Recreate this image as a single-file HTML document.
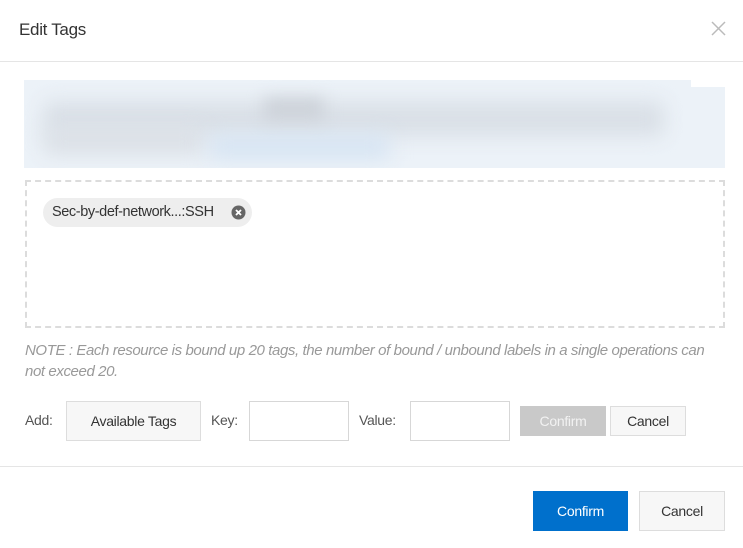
<!DOCTYPE html>
<html><head><meta charset="utf-8"><style>
*{box-sizing:border-box;margin:0;padding:0}
body{width:743px;height:548px;background:#fff;font-family:"Liberation Sans",sans-serif;color:#333;position:relative;overflow:hidden}
.a{position:absolute}
.btn{position:absolute;display:flex;align-items:center;justify-content:center;font-size:14px;border:1px solid #ddd;background:#f7f7f7;color:#333;letter-spacing:-0.3px}
.inp{position:absolute;border:1px solid #d7d7d7;background:#fff}
.lbl{position:absolute;font-size:14px;color:#555;letter-spacing:-0.3px}
</style></head><body>
<div class="a" style="left:19px;top:20px;font-size:17px;color:#333;letter-spacing:-0.3px">Edit Tags</div>
<svg class="a" style="left:711px;top:21px" width="15" height="15" viewBox="0 0 15 15"><path d="M1 1L14 14M14 1L1 14" stroke="#bbb" stroke-width="1.5"/></svg>
<div class="a" style="left:0;top:61px;width:743px;height:1px;background:#e5e5e5"></div>

<div class="a" style="left:24px;top:80px;width:701px;height:88px;background:#ecf2f8;overflow:hidden">
  <div class="a" style="left:667px;top:0;width:34px;height:7px;background:#fff"></div>
  <div class="a" style="left:20px;top:22px;width:620px;height:34px;background:#d9dfe6;filter:blur(10px)"></div>
  <div class="a" style="left:20px;top:48px;width:160px;height:26px;background:#dbe0e6;filter:blur(10px)"></div>
  <div class="a" style="left:185px;top:55px;width:180px;height:24px;background:#d6e4f3;filter:blur(10px)"></div>
  <div class="a" style="left:240px;top:18px;width:60px;height:22px;background:#cdd2d9;filter:blur(8px)"></div>
</div>

<div class="a" style="left:25px;top:180px;width:700px;height:148px;border:2px dashed #dcdcdc"></div>
<div class="a" style="left:43px;top:198px;width:209px;height:29px;border-radius:15px;background:#eee;font-size:14.5px;color:#333;line-height:29px;padding-left:9px;letter-spacing:-0.4px">Sec-by-def-network...:SSH</div>
<svg class="a" style="left:231px;top:205px" width="15" height="15" viewBox="0 0 15 15"><circle cx="7.5" cy="7.5" r="7" fill="#666"/><path d="M5 5L10 10M10 5L5 10" stroke="#fff" stroke-width="1.8"/></svg>

<div class="a" style="left:25px;top:340px;width:692px;font-size:15px;font-style:italic;color:#999;line-height:21px;letter-spacing:-0.4px">NOTE : Each resource is bound up 20 tags, the number of bound / unbound labels in a single operations can not exceed 20.</div>

<div class="lbl" style="left:25px;top:412px">Add:</div>
<div class="btn" style="left:66px;top:401px;width:135px;height:40px">Available Tags</div>
<div class="lbl" style="left:211px;top:412px">Key:</div>
<div class="inp" style="left:249px;top:401px;width:100px;height:40px"></div>
<div class="lbl" style="left:359px;top:412px">Value:</div>
<div class="inp" style="left:410px;top:401px;width:100px;height:40px"></div>
<div class="btn" style="left:520px;top:406px;width:86px;height:30px;background:#c9c9c9;border-color:#c9c9c9;color:#f2f2f2">Confirm</div>
<div class="btn" style="left:610px;top:406px;width:76px;height:30px">Cancel</div>

<div class="a" style="left:0;top:466px;width:743px;height:1px;background:#e5e5e5"></div>
<div class="btn" style="left:533px;top:491px;width:95px;height:40px;background:#0070cc;border-color:#0070cc;color:#fff">Confirm</div>
<div class="btn" style="left:639px;top:491px;width:86px;height:40px">Cancel</div>
</body></html>
